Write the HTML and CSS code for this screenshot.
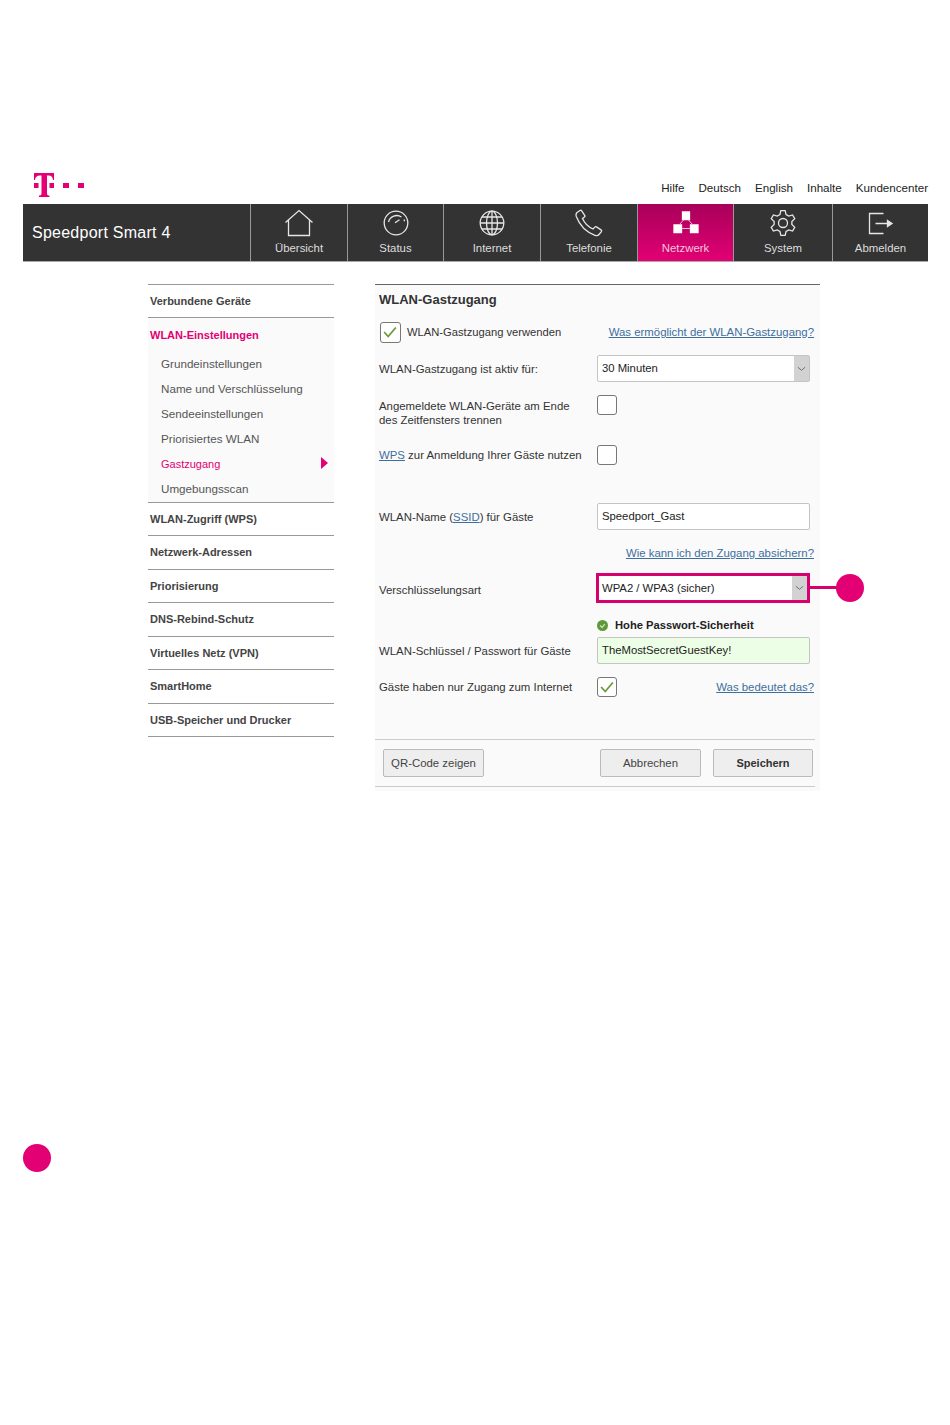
FILE: index.html
```html
<!DOCTYPE html>
<html lang="de">
<head>
  <meta charset="UTF-8" />
  <title>Speedport Smart 4 - WLAN-Gastzugang</title>
  <link rel="stylesheet" href="styles.css">
</head>
<body>
  <header>
    <div class="topbar">
      <svg class="logo" width="52" height="26" viewBox="0 0 52 26">
        <path d="M2 1h20v7h-1c-.2-2.800-1.500-4.500-4.500-4.500h-1.500v17.500c0 2 .6 2.600 2.500 2.600v1.400H7v-1.400c1.900 0 2.500-.6 2.500-2.600V3.500H8C5 3.500 3.200 5.200 3 8H2z"/>
        <rect x="2" y="11" width="4.500" height="5"/>
        <rect x="17.500" y="11" width="4.500" height="5"/>
        <rect x="31" y="11" width="6" height="5"/>
        <rect x="46" y="11" width="6" height="5"/>
      </svg>
      <div class="toplinks">
        <a href="#">Hilfe</a>
        <a href="#">Deutsch</a>
        <a href="#">English</a>
        <a href="#">Inhalte</a>
        <a href="#">Kundencenter</a>
      </div>
    </div>
    <nav class="mainnav">
      <div class="brand">Speedport Smart 4</div>
      <a class="tab tab-1" href="#">
        <svg viewBox="0 0 30 28"><path d="M1.500 13.500 15 1.500l13.500 12M4.500 11v15.500h21V11"/></svg>
        <span>Übersicht</span>
      </a>
      <a class="tab tab-2" href="#">
        <svg viewBox="0 0 30 28"><circle cx="15" cy="14" r="11.800"/><path d="M7.500 13a8.500 8.500 0 0 1 13-5M23 10.500l.6 1.800M14 13.800l4.500-3"/></svg>
        <span>Status</span>
      </a>
      <a class="tab tab-3" href="#">
        <svg viewBox="0 0 30 28"><circle cx="15" cy="14" r="11.800"/><ellipse cx="15" cy="14" rx="5.500" ry="11.800"/><path d="M15 2.200v23.600M3.200 14h23.600M5 8h20M5 20h20"/></svg>
        <span>Internet</span>
      </a>
      <a class="tab tab-4" href="#">
        <svg viewBox="0 0 30 28"><path d="M3 3.500 6 1.500c.7-.4 1.300-.2 1.700.4l3 4.500c.4.600.3 1.200-.3 1.700L8.500 9.500c2 4.500 6 8.500 10.500 10.500l1.800-1.900c.5-.5 1.100-.6 1.700-.2l4.500 3c.6.400.8 1 .4 1.700L25 25.500c-1 1.200-2.500 1.400-4 .8C12 23 5.500 16 2.300 7.500 1.800 6 2 4.500 3 3.500z"/></svg>
        <span>Telefonie</span>
      </a>
      <a class="tab tab-5 active" href="#">
        <svg viewBox="0 0 30 28"><path class="fill" d="M11.500 3h7v7.500h-7zM3 16h7.500v7.500H3zM19.500 16H27v7.500h-7.500z"/><path class="thin" d="M13 10.500 8 16M17 10.500l5 5.500M10.500 19.500h9"/></svg>
        <span>Netzwerk</span>
      </a>
      <a class="tab tab-6" href="#">
        <svg viewBox="0 0 30 28"><path d="M11.920 5.540 12.830 1.690h4.340l.91 3.850 2.710 1.570 3.790-1.150 2.170 3.770-2.890 2.710v3.120l2.890 2.710-2.170 3.770-3.790-1.150-2.710 1.570-.91 3.850h-4.340l-.91-3.850-2.710-1.570-3.790 1.150-2.170-3.770 2.890-2.710v-3.120L3.250 9.730l2.170-3.770 3.790 1.150z"/><circle cx="15" cy="14" r="4.500"/></svg>
        <span>System</span>
      </a>
      <a class="tab tab-7" href="#">
        <svg viewBox="0 0 30 28"><path d="M17.500 4.500H3.500v20h14M9.500 14.500H23"/><path class="fill" d="M21.500 11.500 26 14.500l-4.500 3z"/></svg>
        <span>Abmelden</span>
      </a>
    </nav>
  </header>

  <main class="content">
    <aside class="sidemenu">
      <a class="side-head first" href="#">Verbundene Geräte</a>
      <div class="side-group">
        <a class="side-head current" href="#">WLAN-Einstellungen</a>
        <a class="side-sub" href="#">Grundeinstellungen</a>
        <a class="side-sub" href="#">Name und Verschlüsselung</a>
        <a class="side-sub" href="#">Sendeeinstellungen</a>
        <a class="side-sub" href="#">Priorisiertes WLAN</a>
        <a class="side-sub current" href="#">Gastzugang<i class="side-arrow"></i></a>
        <a class="side-sub" href="#">Umgebungsscan</a>
      </div>
      <a class="side-head" href="#">WLAN-Zugriff (WPS)</a>
      <a class="side-head" href="#">Netzwerk-Adressen</a>
      <a class="side-head" href="#">Priorisierung</a>
      <a class="side-head" href="#">DNS-Rebind-Schutz</a>
      <a class="side-head" href="#">Virtuelles Netz (VPN)</a>
      <a class="side-head" href="#">SmartHome</a>
      <a class="side-head" href="#">USB-Speicher und Drucker</a>
    </aside>

    <section class="panel">
      <h2>WLAN-Gastzugang</h2>

      <div class="row row-use">
        <span class="check big on"><svg viewBox="0 0 20 20"><path d="M3.500 10l4.500 5 8.500-10"/></svg></span>
        <label>WLAN-Gastzugang verwenden</label>
        <a class="help" href="#">Was ermöglicht der WLAN-Gastzugang?</a>
      </div>

      <div class="row row-duration">
        <label class="lbl">WLAN-Gastzugang ist aktiv für:</label>
        <div class="select"><span>30 Minuten</span><b><svg viewBox="0 0 10 6"><path d="M1 1l4 3.500L9 1"/></svg></b></div>
      </div>

      <div class="row row-disconnect">
        <label class="lbl">Angemeldete WLAN-Geräte am Ende<br>des Zeitfensters trennen</label>
        <span class="check"></span>
      </div>

      <div class="row row-wps">
        <label class="lbl"><a href="#">WPS</a> zur Anmeldung Ihrer Gäste nutzen</label>
        <span class="check"></span>
      </div>

      <div class="row row-ssid">
        <label class="lbl">WLAN-Name (<a href="#">SSID</a>) für Gäste</label>
        <div class="input">Speedport_Gast</div>
      </div>

      <div class="row row-link">
        <a class="help" href="#">Wie kann ich den Zugang absichern?</a>
      </div>

      <div class="row row-crypt">
        <label class="lbl">Verschlüsselungsart</label>
        <div class="select marked">
          <span>WPA2 / WPA3 (sicher)</span><b><svg viewBox="0 0 10 6"><path d="M1 1l4 3.500L9 1"/></svg></b>
          <i class="callout"></i>
        </div>
      </div>

      <div class="row row-strength">
        <span class="ok-dot"><svg viewBox="0 0 12 12"><path d="M3.500 6l2 2 3-3.500"/></svg></span>
        <strong>Hohe Passwort-Sicherheit</strong>
      </div>

      <div class="row row-key">
        <label class="lbl">WLAN-Schlüssel / Passwort für Gäste</label>
        <div class="input valid">TheMostSecretGuestKey!</div>
      </div>

      <div class="row row-only">
        <label class="lbl">Gäste haben nur Zugang zum Internet</label>
        <span class="check on"><svg viewBox="0 0 20 20"><path d="M3.500 10l4.500 5 8.500-10"/></svg></span>
        <a class="help" href="#">Was bedeutet das?</a>
      </div>

      <div class="actions">
        <button>QR-Code zeigen</button>
        <button class="push">Abbrechen</button>
        <button class="primary">Speichern</button>
      </div>
    </section>
  </main>

  <div class="legend-dot"></div>
</body>
</html>
```
FILE: styles.css
```css
:root {
  --magenta: #e20074;
  --mark: #d6006e;
  --bar: #333333;
  --text: #333333;
  --link: #3d6f9e;
  --line: #999999;
  --panel: #fafafa;
}

* {
  margin: 0;
  padding: 0;
  box-sizing: border-box;
}

body {
  font-family: "Liberation Sans", Arial, sans-serif;
  font-size: 11.400px;
  color: var(--text);
  background-color: #ffffff;
  padding: 172px 22px 0 23px;
}

a {
  color: inherit;
  text-decoration: none;
}

/* top */
.topbar {
  height: 32px;
  display: flex;
  justify-content: space-between;
}

.logo {
  margin-left: 9px;
  fill: var(--magenta);
}

.toplinks {
  display: flex;
  gap: 14px;
  padding-top: 9px;
  font-size: 11.600px;
  color: #222222;
}

.mainnav {
  height: 58px;
  display: flex;
  background-color: var(--bar);
  border-bottom: 1px solid #aaaaaa;
}

.brand {
  width: 227px;
  padding: 20px 0 0 9px;
  font-size: 16px;
  letter-spacing: 0.250px;
  color: #ffffff;
}

.tab {
  display: flex;
  flex-direction: column;
  align-items: center;
  border-left: 1px solid #999999;
  font-size: 11.400px;
  color: #dddddd;
}

.tab svg {
  width: 30px;
  height: 28px;
  margin-top: 5px;
  fill: none;
  stroke: #e6e6e6;
  stroke-width: 1.300;
}

.tab svg .fill {
  fill: #e6e6e6;
}

.tab span {
  margin-top: 5px;
}

.tab-1 { width: 97px; }
.tab-2 { width: 96px; }
.tab-3 { width: 97px; }
.tab-4 { width: 97px; }
.tab-5 { width: 96px; }
.tab-6 { width: 99px; }
.tab-7 { width: 96px; }

.tab.active {
  background: linear-gradient(#a80059, var(--magenta));
  color: #f5c6de;
}

.tab.active svg {
  stroke: #ffffff;
}

.tab.active svg .fill {
  fill: #ffffff;
}

.tab.active svg .thin {
  stroke: #f5b8d6;
  stroke-width: 1;
}

/* content */
.content {
  display: flex;
  align-items: flex-start;
  gap: 41px;
  margin: 22px 0 0 125px;
}

.sidemenu {
  width: 186px;
  border-top: 1px solid var(--line);
}

.side-head {
  display: block;
  height: 33.500px;
  padding: 10px 0 0 2px;
  font-size: 11px;
  font-weight: bold;
  color: #444444;
  border-bottom: 1px solid var(--line);
}

.side-head.first {
  height: 33px;
}

.side-group {
  background-color: var(--panel);
  border-bottom: 1px solid var(--line);
  height: 184.500px;
}

.side-group .side-head {
  border-bottom: none;
  height: 33px;
  padding-top: 11px;
  font-size: 11px;
}

.side-head.current,
.side-sub.current {
  color: var(--magenta);
}

.side-sub {
  position: relative;
  display: block;
  height: 25px;
  padding: 6px 0 0 13px;
  font-size: 11.650px;
  color: #555555;
}

.side-sub.current {
  font-size: 11px;
  padding-top: 7px;
}

.side-arrow {
  position: absolute;
  right: 6px;
  top: 6px;
  border-left: 7px solid var(--magenta);
  border-top: 6px solid transparent;
  border-bottom: 6px solid transparent;
}

.panel {
  width: 445px;
  height: 507px;
  background-color: var(--panel);
  border-top: 1px solid #666666;
  padding: 0 6px 0 4px;
}

.panel h2 {
  font-size: 13px;
  line-height: 15px;
  padding-top: 7px;
  height: 36px;
  color: #333333;
}

.row {
  display: flex;
  align-items: center;
}

.lbl {
  width: 218px;
  flex: none;
}

.lbl a,
.help {
  color: var(--link);
  text-decoration: underline;
}

.help {
  margin-left: auto;
}

.check {
  flex: none;
  width: 20px;
  height: 20px;
  background-color: #ffffff;
  border: 1px solid #777777;
  border-radius: 3px;
}

.check svg {
  display: block;
  width: 18px;
  height: 18px;
  fill: none;
  stroke: #6a9a3a;
  stroke-width: 2;
}

.check.big {
  width: 21px;
  height: 21px;
  margin: 0 6px 0 1px;
}

.row-use label {
  font-size: 11.200px;
}

.select,
.input {
  width: 213px;
  height: 27px;
  flex: none;
  background-color: #ffffff;
  border: 1px solid #c4c4c4;
  border-radius: 2px;
  font-size: 11.300px;
  line-height: 24px;
  padding-left: 4px;
  color: #222222;
}

.select {
  position: relative;
  display: flex;
  justify-content: space-between;
}

.select b {
  width: 15px;
  background-color: #d2d2d2;
  display: flex;
  align-items: center;
  justify-content: center;
}

.select b svg {
  width: 9px;
  height: 6px;
  fill: none;
  stroke: #666666;
}

.select.marked {
  width: 214px;
  height: 30px;
  margin-left: -1px;
  padding-left: 3px;
  border: 3px solid var(--mark);
  border-radius: 0;
  line-height: 25px;
}

/* Verbindungslinie zum Punkt rechts */
.callout {
  position: absolute;
  left: 211px;
  top: 10px;
  width: 30px;
  height: 3px;
  background-color: var(--mark);
}

.callout::after {
  content: "";
  position: absolute;
  left: 26px;
  top: -12.500px;
  width: 28px;
  height: 28px;
  border-radius: 50%;
  background-color: var(--magenta);
}

.input.valid {
  background-color: #ecffe6;
}

.row-use { height: 22px; }
.row-duration { height: 27px; margin-top: 12px; }
.row-disconnect { height: 30px; margin-top: 13px; align-items: flex-start; }
.row-disconnect .lbl { padding-top: 4px; line-height: 14px; }
.row-wps { height: 20px; margin-top: 20px; }
.row-ssid { height: 27px; margin-top: 38px; }
.row-link { height: 16px; margin-top: 15px; }
.row-crypt { height: 30px; margin-top: 12px; }
.row-crypt .lbl { padding-top: 3px; }
.row-strength { height: 14px; margin-top: 15px; padding-left: 218px; font-size: 11.200px; color: #222222; }
.row-key { height: 27px; margin-top: 5px; }
.row-only { height: 20px; margin-top: 13px; }

.ok-dot {
  width: 11px;
  height: 11px;
  margin-right: 7px;
  border-radius: 50%;
  background-color: #5f9a3a;
}

.ok-dot svg {
  display: block;
  fill: none;
  stroke: #d6ecc8;
  stroke-width: 1.200;
}

.actions {
  display: flex;
  gap: 12px;
  margin: 42px -1px 0 -4px;
  padding: 9px 2px 9px 8px;
  border-top: 1px solid #cccccc;
  border-bottom: 1px solid #cccccc;
}

button {
  width: 101px;
  height: 28px;
  font-family: inherit;
  font-size: 11.400px;
  color: #444444;
  background-color: #eeeeee;
  border: 1px solid #bbbbbb;
  border-radius: 2px;
}

.push {
  margin-left: auto;
}

button.primary {
  width: 100px;
  font-size: 11px;
  font-weight: bold;
  color: #333333;
}

.legend-dot {
  width: 28px;
  height: 28px;
  margin-top: 353px;
  border-radius: 50%;
  background-color: var(--magenta);
}
```
